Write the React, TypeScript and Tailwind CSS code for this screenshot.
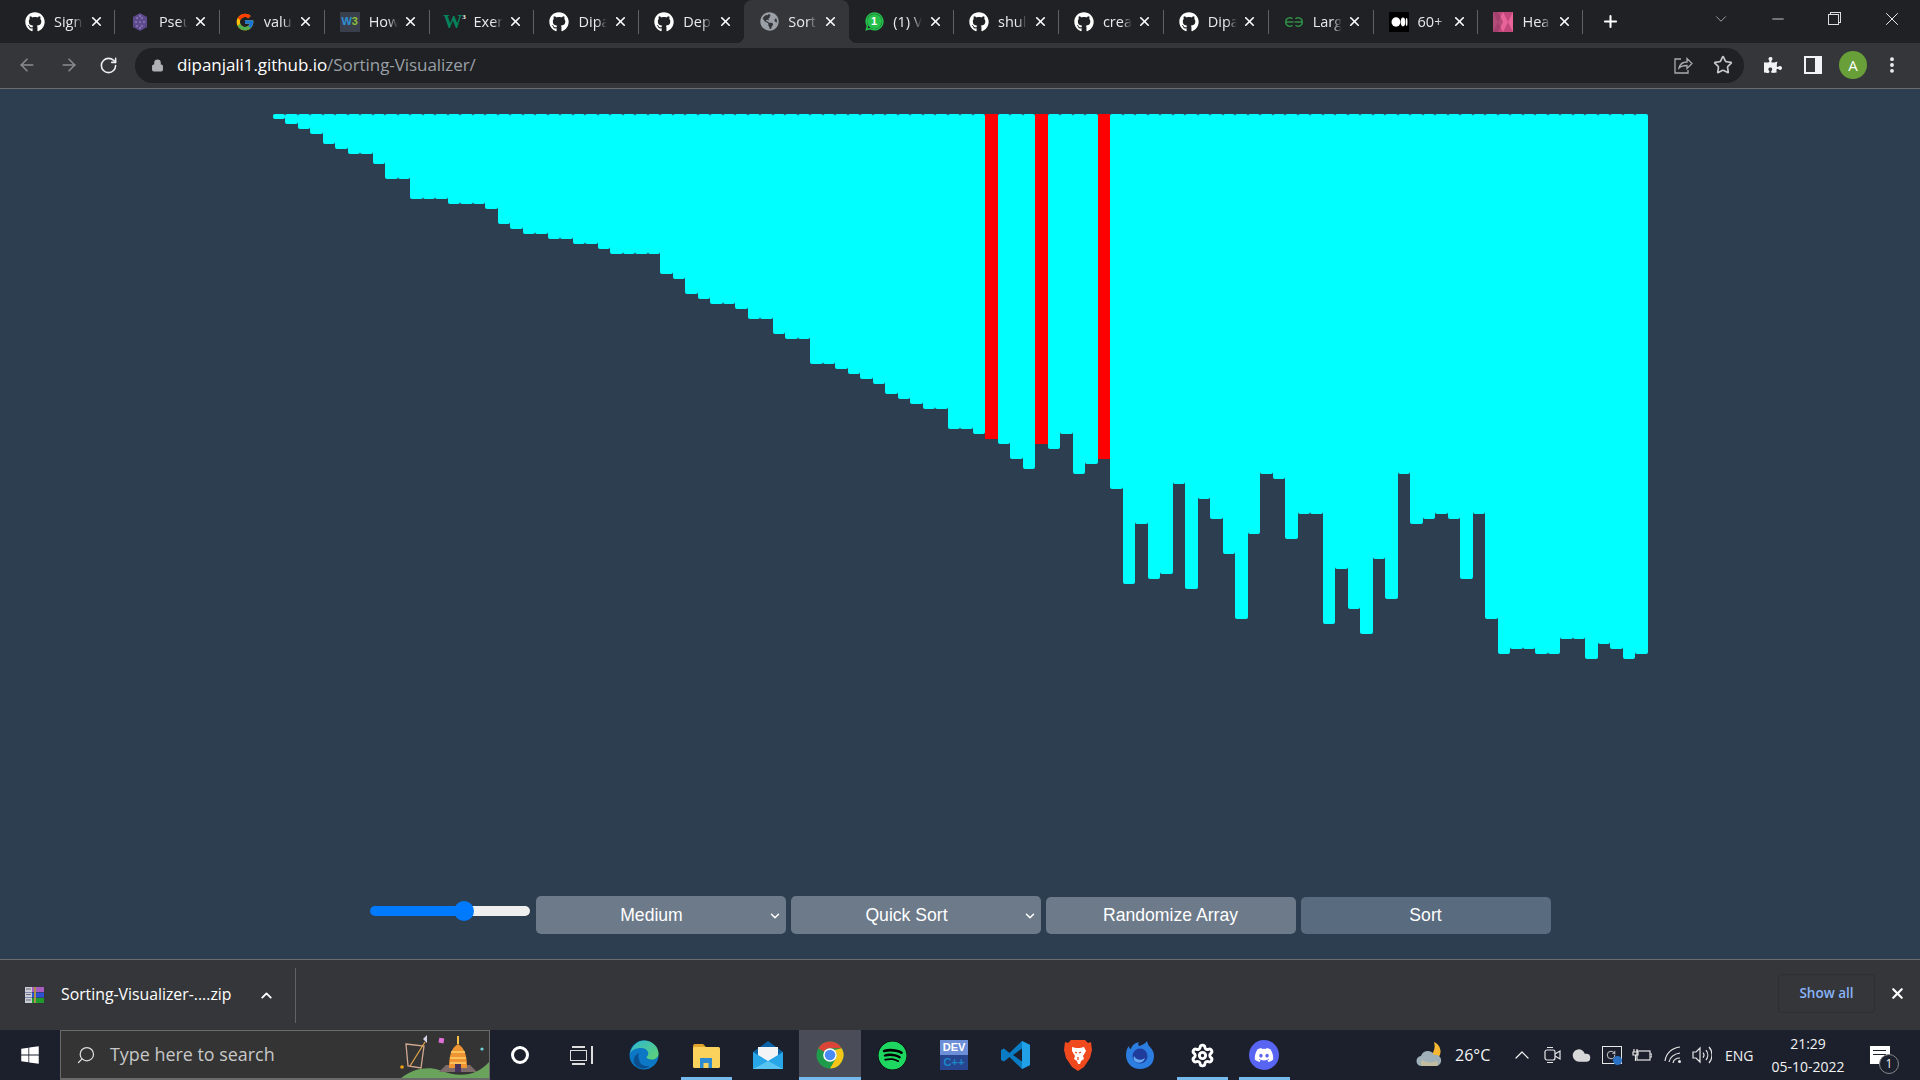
import React from 'react';
import { ArrowLeft, ArrowRight, RotateCw, Lock, Star, MoreVertical, X, Plus, ChevronDown, ChevronUp, Minus, Search, Settings, Cloud } from 'lucide-react';
import { FaGithub, FaGlobeAmericas, FaWhatsapp, FaWindows, FaSpotify, FaDiscord, FaPuzzlePiece } from 'react-icons/fa';
import { FcGoogle } from 'react-icons/fc';

const heights = [
  1, 2, 3, 4, 6, 7, 8, 8, 10, 13, 13, 17, 17, 17, 18, 18, 18, 19, 22, 23, 24, 24, 25, 25, 26, 26, 27, 28, 28, 28, 28, 32, 33, 36, 37,
  38, 38, 39, 41, 41, 44, 45, 45, 50, 50, 51, 52, 53, 54, 56, 57, 58, 59, 59, 63, 63, 64, 65, 66, 69, 71, 66, 67, 64, 72, 70, 69, 75,
  94, 82, 93, 92, 74, 95, 77, 81, 88, 101, 84, 72, 73, 85, 80, 80, 102, 91, 99, 104, 89, 97, 72, 82, 81, 80, 81, 93, 80, 101, 108,
  107, 107, 108, 108, 105, 105, 109, 106, 107, 109, 108,
];
const redBars = [57, 61, 66];

const PseudoIcon = () => (
  <svg width="20" height="20" viewBox="0 0 20 20">
    <polygon points="10,1 17,5 17,15 10,19 3,15 3,5" fill="#5d4a8c" />
    <path d="M6 6h2M11 6h2M5 10h2M9 10h2M13 10h2M6 14h2M11 14h2M10 3v2M10 15v2" stroke="#9d8cc9" strokeWidth="1.2" />
  </svg>
);

const W3Icon = () => (
  <div className="flex h-5 w-5 items-center justify-center bg-[#3a3f4c] font-['Liberation_Sans',sans-serif] text-[11px] font-bold leading-none">
    <span className="text-[#2d8fd5]">W</span>
    <span className="text-[#8bbf3a]">3</span>
  </div>
);

const W3SchoolsIcon = () => (
  <div className="flex h-5 w-5 items-start justify-center font-['Liberation_Serif',serif] text-[19px] font-bold leading-[20px] text-[#04845c]">
    W<span className="text-[7px] leading-[10px] text-white">3</span>
  </div>
);

const WhatsappBadge = () => (
  <div className="relative flex h-5 w-5 items-center justify-center text-[#25c04c]">
    <FaWhatsapp size={21} className="absolute" />
    <span className="absolute flex h-[15px] w-[15px] items-center justify-center rounded-full bg-[#25c04c] font-['Liberation_Sans',sans-serif] text-[11px] font-bold text-white">1</span>
  </div>
);

const GfgIcon = () => (
  <svg width="20" height="20" viewBox="0 0 20 20" fill="none" stroke="#2f8d46" strokeWidth="1.5">
    <path d="M9.5 10H1.5M10.5 10H18.5M8.5 6.8A4 4 0 0 0 1.8 10a4 4 0 0 0 6.7 3.2M11.5 6.8a4 4 0 0 1 6.7 3.2 4 4 0 0 1-6.7 3.2" />
  </svg>
);

const MediumIcon = () => (
  <svg width="20" height="20" viewBox="0 0 20 20">
    <rect width="20" height="20" rx="1" fill="#000" />
    <ellipse cx="7" cy="10" rx="4.5" ry="4.7" fill="#fff" />
    <ellipse cx="14" cy="10" rx="2.2" ry="4.4" fill="#fff" />
    <ellipse cx="17.6" cy="10" rx="0.9" ry="4" fill="#fff" />
  </svg>
);

const PinkIcon = () => (
  <svg width="20" height="20" viewBox="0 0 20 20">
    <rect width="20" height="20" fill="#c2487c" />
    <path d="M0 0l5 10L0 20zM20 0l-5 10 5 10zM5 10l5-10 5 10-5 10z" fill="#e86498" />
    <path d="M0 0h5l5 10-5 10H0z" fill="#8c3a62" opacity=".6" />
  </svg>
);

const tabs: { icon: React.ReactNode; title: string }[] = [
  { icon: <FaGithub size={20} color="#fff" />, title: 'Sign' },
  { icon: <PseudoIcon />, title: 'Pseu' },
  { icon: <FcGoogle size={20} />, title: 'valu' },
  { icon: <W3Icon />, title: 'How' },
  { icon: <W3SchoolsIcon />, title: 'Exer' },
  { icon: <FaGithub size={20} color="#fff" />, title: 'Dipa' },
  { icon: <FaGithub size={20} color="#fff" />, title: 'Dep' },
  { icon: <FaGlobeAmericas size={19} color="#9aa0a6" />, title: 'Sort' },
  { icon: <WhatsappBadge />, title: '(1) V' },
  { icon: <FaGithub size={20} color="#fff" />, title: 'shul' },
  { icon: <FaGithub size={20} color="#fff" />, title: 'crea' },
  { icon: <FaGithub size={20} color="#fff" />, title: 'Dipa' },
  { icon: <GfgIcon />, title: 'Larg' },
  { icon: <MediumIcon />, title: '60+' },
  { icon: <PinkIcon />, title: 'Hea' },
];
const activeTab = 7;

const TabStrip = () => (
  <div className="flex h-[43px] shrink-0 items-center bg-[#202124] pl-[10px] font-['Open_Sans',sans-serif] text-[14.5px] text-[#e8eaed]">
    {tabs.map((tab, i) => {
      const hideLine = i === activeTab || i === activeTab - 1;
      return (
        <div key={i} className={i === activeTab ? 'relative flex h-[43px] w-[104.9px] items-center rounded-t-lg bg-[#35363a] pl-[15px]' : 'relative flex h-[43px] w-[104.9px] items-center pl-[15px]'}>
          {i === activeTab && <span className="absolute -left-2 bottom-0 h-2 w-2 bg-[radial-gradient(circle_at_0_0,transparent_8px,#35363a_8.5px)]" />}
          {i === activeTab && <span className="absolute -right-2 bottom-0 h-2 w-2 bg-[radial-gradient(circle_at_100%_0,transparent_8px,#35363a_8.5px)]" />}
          <div className="flex w-5 shrink-0 items-center justify-center">{tab.icon}</div>
          <div className="ml-[9px] w-[32px] overflow-hidden whitespace-nowrap [mask-image:linear-gradient(to_right,black_60%,transparent_90%)]">{tab.title}</div>
          <X size={15} strokeWidth={2.6} color="#fff" className="ml-[2.5px] shrink-0" />
          {!hideLine && <span className="absolute right-0 top-[10px] h-[24px] w-px bg-[#5f6368]" />}
        </div>
      );
    })}
    <Plus size={19} strokeWidth={2.6} color="#fff" className="ml-[18px] shrink-0" />
    <ChevronDown size={18} strokeWidth={1} color="#c4c7c9" className="ml-[92px] -mt-[6px] shrink-0" />
    <Minus size={18} strokeWidth={1} color="#fff" className="ml-[39px] -mt-[6px] shrink-0" />
    <div className="relative ml-[41px] -mt-[6px] h-[13px] w-[13px] shrink-0">
      <span className="absolute right-0 top-0 h-[11px] w-[11px] border border-[#ddd]" />
      <span className="absolute bottom-0 left-0 h-[11px] w-[11px] border border-[#ddd] bg-[#202124]" />
    </div>
    <X size={22} strokeWidth={1} color="#fff" className="ml-[40px] -mt-[6px] shrink-0" />
  </div>
);

const ShareIcon = () => (
  <svg width="20" height="20" viewBox="0 0 20 20" fill="none" stroke="#a9abae" strokeWidth="1.3">
    <path d="M8 4H2v14h13v-3" />
    <path d="M6 13c1-4 4-6 8-6V3.500l5 5-5 5V10.500c-3 0-6 .5-8 2.500z" />
  </svg>
);

const Toolbar = () => (
  <div className="flex h-[46px] shrink-0 items-center border-b border-[#6d6e70] bg-[#35363a] pb-px">
    <ArrowLeft size={20} color="#8b8d90" strokeWidth={1.8} className="ml-[17px]" />
    <ArrowRight size={20} color="#8b8d90" strokeWidth={1.8} className="ml-[22px]" />
    <RotateCw size={19} color="#eceef0" strokeWidth={2} className="ml-[20px]" />
    <div className="ml-[17px] flex h-[35px] w-[1609px] items-center rounded-full bg-[#202124] pl-[16px]">
      <Lock size={13} fill="#aeb1b5" color="#aeb1b5" strokeWidth={2} />
      <div className="ml-[13px] font-['Open_Sans',sans-serif] text-[17px] tracking-[-0.06px] text-[#9aa0a6]">
        <span className="text-white">dipanjali1.github.io</span>/Sorting-Visualizer/
      </div>
      <div className="ml-auto flex items-center pr-[11px]">
        <ShareIcon />
        <Star size={20} color="#c6c8ca" strokeWidth={2} className="ml-[20px]" />
      </div>
    </div>
    <FaPuzzlePiece size={18} color="#f1f3f4" className="ml-[20px]" />
    <div className="ml-[22px] h-[18px] w-[18px] border-2 border-[#f1f3f4] border-r-[7px]" />
    <div className="ml-[17px] flex h-7 w-7 items-center justify-center rounded-full bg-[#689f38] font-['Open_Sans',sans-serif] text-[15px] text-white">A</div>
    <MoreVertical size={20} color="#f1f3f4" strokeWidth={2.6} className="ml-[15px]" />
  </div>
);

const Dropdown = ({ value, options }: { value: string; options: string[] }) => (
  <div className="relative">
    <select defaultValue={value} className="h-[38px] w-[250px] appearance-none rounded-[5px] bg-[#6c7a89] pr-[18px] text-center text-[17.6px] text-white">
      {options.map((option) => (
        <option key={option}>{option}</option>
      ))}
    </select>
    <ChevronDown size={14} strokeWidth={2.6} color="#fff" className="pointer-events-none absolute right-[4px] top-[13px]" />
  </div>
);

const Visualizer = () => (
  <div className="flex min-h-0 flex-1 flex-col bg-[#2c3e50] font-['Liberation_Sans',sans-serif]">
    <div className="flex flex-1 items-start justify-center pt-[25px]">
      {heights.map((value, i) => (
        <div
          key={i}
          className={redBars.includes(i) ? 'w-[12.5px] bg-[#ff0000]' : 'w-[12.5px] rounded-[2px] bg-[#00ffff]'}
          style={{ height: value * 5 }}
        />
      ))}
    </div>
    <div className="mb-[25px] flex items-end justify-center gap-[5px]">
      <input
        type="range"
        min={0}
        max={100}
        defaultValue={60}
        className="mb-[18px] mr-px h-[10px] w-[160px] appearance-none rounded-[5px] bg-[linear-gradient(to_right,#007bff_58%,#efefef_58%)] [&::-webkit-slider-thumb]:h-5 [&::-webkit-slider-thumb]:w-5 [&::-webkit-slider-thumb]:appearance-none [&::-webkit-slider-thumb]:rounded-full [&::-webkit-slider-thumb]:bg-[#007bff]"
      />
      <Dropdown value="Medium" options={['Small', 'Medium', 'Large']} />
      <Dropdown value="Quick Sort" options={['Bubble Sort', 'Merge Sort', 'Quick Sort', 'Heap Sort']} />
      <button className="h-[37px] w-[250px] rounded-[5px] bg-[#6c7a89] text-[17.6px] text-white">Randomize Array</button>
      <button className="h-[37px] w-[250px] rounded-[5px] bg-[#596b7e] text-[17.6px] text-white">Sort</button>
    </div>
  </div>
);

const RarIcon = () => (
  <svg width="20" height="16" viewBox="0 0 20 16">
    <rect x="0" y="0" width="19" height="5" fill="#a85cc0" />
    <rect x="0" y="5.500" width="19" height="5" fill="#2f4fd0" />
    <rect x="0" y="11" width="19" height="5" fill="#1f9a2c" />
    <path d="M0 0h7v5H0zM0 5.500h7v5H0zM0 11h7v5H0z" fill="#c9ccd4" />
    <path d="M9 0h2v16H9z" fill="#a8924a" />
    <path d="M1 2h5M1 7.500h5M1 13h5" stroke="#6b6e78" />
  </svg>
);

const DownloadBar = () => (
  <div className="flex h-[71px] shrink-0 items-center border-t border-[#6d6e70] bg-[#35363a] font-['Open_Sans',sans-serif] text-white">
    <div className="ml-[25px] -mt-px"><RarIcon /></div>
    <div className="ml-4 w-[171px] whitespace-nowrap text-[15.8px]">Sorting-Visualizer-....zip</div>
    <ChevronUp size={17} strokeWidth={2.6} className="ml-[26px]" />
    <div className="ml-[20px] h-[55px] w-px bg-[#5f6368]" />
    <div className="ml-auto -mt-[3px] flex h-[39px] w-[97px] items-center justify-center rounded-[4px] border border-[#2e2f32] text-[13.5px] font-semibold text-[#8ab4f8]">Show all</div>
    <X size={17} strokeWidth={3} className="ml-[14px] mr-[14px] -mt-[3px]" />
  </div>
);

const TempleDoodle = () => (
  <svg width="90" height="50" viewBox="0 0 90 50" className="ml-auto shrink-0">
    <path d="M0 50C12 38 30 36 40 40c20 8 38 6 50-8v18z" fill="#69a35c" />
    <path d="M7 14l18 2-3 22-13-2z" fill="none" stroke="#d0a890" strokeWidth="1.3" />
    <path d="M11 36L26 12" stroke="#e0a34a" strokeWidth="1.3" />
    <path d="M24 9l4 4 0-8z" fill="#d8d0e8" />
    <rect x="40" y="8" width="5" height="5" fill="#e070d8" transform="rotate(10 42 10)" />
    <circle cx="3" cy="37" r="1.8" fill="#f0a010" />
    <circle cx="83" cy="19" r="1.6" fill="#6fd4e0" />
    <path d="M40 42l7-7h24l7 7z" fill="#7d6a6a" />
    <path d="M50 38c0-12 2-20 9-24 7 4 9 12 9 24z" fill="#ef9432" />
    <path d="M52 22h14M51 28h16M51 33h16" stroke="#ffd16a" strokeWidth="1.6" />
    <rect x="56" y="34" width="6" height="8" fill="#46345a" />
    <path d="M59 6v8" stroke="#f4c04a" strokeWidth="2" />
  </svg>
);

const Edge = () => (
  <svg width="30" height="30" viewBox="0 0 30 30">
    <defs>
      <linearGradient id="edgeA" x1="0" y1="0" x2="1" y2="1">
        <stop offset="0" stopColor="#2fb7d4" />
        <stop offset="1" stopColor="#62d36f" />
      </linearGradient>
    </defs>
    <circle cx="15" cy="15" r="14.5" fill="#0c78c5" />
    <path d="M1 14C3 5 9 .5 15 .5c8 0 14.500 6 14.500 13 0 4-3.500 6-7 6-3 0-5-1-5-2.500 4-3 1-9-5-9-6 0-10 2-11.500 6z" fill="url(#edgeA)" />
    <path d="M10 19c0 5 5 8 11 7-5 4-13 3-16-3-1-3 0-8 5-10-1 2-1 4 0 6z" fill="#0a4f8f" />
  </svg>
);

const Folder = () => (
  <svg width="28" height="28" viewBox="0 0 28 28">
    <path d="M1 5a2 2 0 0 1 2-2h8l3 3v4H1z" fill="#e2a52b" />
    <rect x="1" y="6" width="27" height="21" rx="1.5" fill="#fbd25c" />
    <path d="M8 27V17h12v10h-3.500v-5h-5v5z" fill="#2f8bd1" />
  </svg>
);

const Mail = () => (
  <svg width="30" height="30" viewBox="0 0 30 30">
    <path d="M15 1L0 12v17h30V12z" fill="#0a63a8" />
    <path d="M5 7h20v10L15 22 5 17z" fill="#f2f4f6" />
    <path d="M0 12l15 9 15-9v17H0z" fill="#29a6e8" />
    <path d="M0 29l15-8 15 8z" fill="#58c4f2" />
  </svg>
);

const ChromeIcon = () => (
  <svg width="28" height="28" viewBox="0 0 28 28">
    <circle cx="14" cy="14" r="13.500" fill="#1e9c4b" />
    <path d="M14 .5A13.500 13.500 0 0 1 25.700 7.250H14a6.750 6.750 0 0 0-5.850 3.380L2.300 7.250A13.500 13.500 0 0 1 14 .5z" fill="#dc4437" />
    <path d="M25.700 7.250A13.500 13.500 0 0 1 14 27.500l5.850-10.120A6.750 6.750 0 0 0 20.750 14a6.750 6.750 0 0 0-2.250-5z" fill="#f5c518" />
    <circle cx="14" cy="14" r="6.800" fill="#fff" />
    <circle cx="14" cy="14" r="5.300" fill="#4a8af4" />
  </svg>
);

const DevCpp = () => (
  <div className="flex h-[30px] w-[28px] flex-col items-center bg-[#27468f] font-['Liberation_Sans',sans-serif] text-[11px] font-bold leading-[14px]">
    <span className="h-[15px] w-full bg-[#6d8fd8] text-center text-white">DEV</span>
    <span className="text-[#1b88c8]">C++</span>
  </div>
);

const VsCode = () => (
  <svg width="30" height="30" viewBox="0 0 30 30">
    <path d="M21 1l8 4v20l-8 4L8.500 17 3 21.500 0 20v-10l3-1.500L8.500 13z" fill="#0a7cc4" />
    <path d="M21 8.500L12 15l9 6.500z" fill="#1b1f2b" />
    <path d="M21 1l8 4v20l-8 4z" fill="#21a0e8" />
  </svg>
);

const Brave = () => (
  <svg width="28" height="32" viewBox="0 0 28 32">
    <path d="M7 1h14l3 3 3-1 1 8-2 8-6 9-6 4-6-4-6-9-2-8 1-8 3 1z" fill="#f0491d" />
    <path d="M8 8l4 1h4l4-1 2 4-3 5 1 3-3 2-1 3h-2l-1-3-3-2 1-3-3-5z" fill="#fff" />
    <path d="M11 13l2 1M17 13l-2 1M14 18v3" stroke="#f0491d" strokeWidth="1.300" />
  </svg>
);

const Firefox = () => (
  <svg width="30" height="30" viewBox="0 0 30 30">
    <path d="M22 1c1 3 1 4 3 6 3 3 4 6 4 9 0 8-6 13-14 13S1 23 1 15c0-4 1-7 3-9 0 2 1 3 2 3 1-4 4-6 8-7-1 2-1 3 0 4 3-1 6-2 8-5z" fill="#2b7de0" />
    <circle cx="15" cy="16" r="7.500" fill="#1f3c9c" />
    <path d="M9 16c2 4 7 5 11 2-1 4-5 6-9 4-2-1-3-3-2-6z" fill="#65a7f0" />
  </svg>
);

const taskIcons: { icon: React.ReactNode; open?: boolean; active?: boolean }[] = [
  { icon: <Edge /> },
  { icon: <Folder />, open: true },
  { icon: <Mail /> },
  { icon: <ChromeIcon />, open: true, active: true },
  { icon: <FaSpotify size={29} color="#1ed760" className="rounded-full bg-black" /> },
  { icon: <DevCpp /> },
  { icon: <VsCode /> },
  { icon: <Brave /> },
  { icon: <Firefox /> },
  { icon: <Settings size={25} strokeWidth={2.8} color="#fff" />, open: true },
  {
    icon: (
      <div className="flex h-[30px] w-[30px] items-center justify-center rounded-full bg-[#5865f2]">
        <FaDiscord size={20} color="#fff" />
      </div>
    ),
    open: true,
  },
];

const WeatherIcon = () => (
  <svg width="28" height="28" viewBox="0 0 28 28">
    <path d="M18 1a10 10 0 0 1 3 17l-8-2c4-3 7-8 5-15z" fill="#f7b733" />
    <path d="M6 25a5 5 0 0 1-1-10 7 7 0 0 1 13-1 5.500 5.500 0 0 1 3 11z" fill="#9fb0b8" />
    <path d="M6 25a5 5 0 0 1 0-6c5 3 11 3 15 1 1 2 1 4 0 5z" fill="#c2bda0" />
  </svg>
);

const MeetIcon = () => (
  <svg width="17" height="20" viewBox="0 0 17 20" fill="none" stroke="#e6e6e6" strokeWidth="1.2">
    <rect x="1" y="5" width="10" height="10" rx="2" />
    <path d="M11 9l5-3v8l-5-3M3 2.500h6M3 17.500h6" />
  </svg>
);

const ScreenIcon = () => (
  <div className="relative h-[18px] w-[20px] border border-[#e6e6e6]">
    <RotateCw size={10} color="#e6e6e6" className="absolute left-[3px] top-[3px]" />
    <span className="absolute -bottom-[2px] -right-[1px] h-[9px] w-[9px] rounded-full bg-[#2a72c4]" />
  </div>
);

const PlugBattery = () => (
  <svg width="20" height="14" viewBox="0 0 20 14" fill="none" stroke="#e6e6e6" strokeWidth="1.2">
    <rect x="5" y="3" width="13" height="9" />
    <path d="M18 6h2v3h-2" />
    <path d="M1 4h5v3H1zM2 4V1M5 4V1M3.500 7v6" />
  </svg>
);

const WifiArcs = () => (
  <svg width="18" height="18" viewBox="0 0 18 18" fill="none" stroke="#e6e6e6" strokeWidth="1.2">
    <path d="M1 15C2 7 8 2 16 1M5 16c1-5 5-8 11-9M9 17c.5-3 3-5 7-5" />
    <circle cx="15.500" cy="15.500" r="1.500" fill="#e6e6e6" stroke="none" />
  </svg>
);

const VolumeIcon = () => (
  <svg width="20" height="20" viewBox="0 0 20 20" fill="none" stroke="#e6e6e6" strokeWidth="1.2">
    <path d="M1 7h3l4-4v14l-4-4H1zM11 7.500a4 4 0 0 1 0 5M14 5a8 8 0 0 1 0 10M17 2a12 12 0 0 1 0 16" />
  </svg>
);

const Taskbar = () => (
  <div className="flex h-[50px] shrink-0 items-stretch bg-[#1b202c] font-['Open_Sans',sans-serif] text-white">
    <div className="flex w-[60px] items-center justify-center">
      <FaWindows size={20} color="#fff" />
    </div>
    <div className="flex w-[430px] items-center overflow-hidden border border-b-2 border-[#6a6a6a] bg-[#343434] pl-[15px]">
      <Search size={20} strokeWidth={1.5} color="#ddd" className="-scale-x-100" />
      <span className="ml-[14px] text-[17.9px] text-[#c8c8c8]">Type here to search</span>
      <TempleDoodle />
    </div>
    <div className="flex w-[60px] items-center justify-center">
      <div className="h-[18px] w-[18px] rounded-full border-[3px] border-white" />
    </div>
    <div className="flex w-[63px] items-center justify-center">
      <div className="flex flex-col items-center gap-[2px]">
        <span className="h-[2px] w-[13px] bg-[#ddd]" />
        <span className="h-[11px] w-[17px] border border-[#ddd]" />
        <span className="h-[2px] w-[13px] bg-[#ddd]" />
      </div>
      <span className="ml-[4px] h-[18px] w-[2px] bg-[#ddd]" />
    </div>
    {taskIcons.map((task, i) => (
      <div key={i} className={task.active ? 'relative flex w-[62px] items-center justify-center bg-[#4a4d57]' : 'relative flex w-[62px] items-center justify-center'}>
        {task.icon}
        {task.open && <span className={task.active ? 'absolute bottom-0 h-[3px] w-full bg-[#76b9ed]' : 'absolute bottom-0 h-[3px] w-[51px] bg-[#76b9ed]'} />}
      </div>
    ))}
    <div className="ml-auto flex items-center text-[#f2f2f2]">
      <WeatherIcon />
      <span className="ml-[11px] w-[38px] whitespace-nowrap text-[16px]">26°C</span>
      <ChevronUp size={24} strokeWidth={1.2} className="ml-[17px]" />
      <div className="ml-[10px]"><MeetIcon /></div>
      <Cloud size={21} fill="#d8d8d8" strokeWidth={0} className="ml-[10px]" />
      <div className="ml-[10px]"><ScreenIcon /></div>
      <div className="ml-[10px]"><PlugBattery /></div>
      <div className="ml-[12px]"><WifiArcs /></div>
      <div className="ml-[10px]"><VolumeIcon /></div>
      <span className="ml-[13px] w-[30px] text-[14px]">ENG</span>
      <div className="ml-[13px] flex w-[80px] flex-col items-center text-[14px] leading-[23px]">
        <span>21:29</span>
        <span>05-10-2022</span>
      </div>
      <div className="relative ml-[22px] mr-[30px] h-[18px] w-[20px] bg-white">
        <span className="absolute left-[3px] top-[4px] h-px w-[13px] bg-[#1b202c]" />
        <span className="absolute left-[3px] top-[8px] h-px w-[13px] bg-[#1b202c]" />
        <span className="absolute -bottom-[10px] -right-[9px] flex h-[20px] w-[20px] items-center justify-center rounded-full border border-[#888] bg-[#1b202c] text-[12px]">1</span>
      </div>
    </div>
  </div>
);

export default function App() {
  return (
    <div className="flex h-screen w-full flex-col overflow-hidden">
      <TabStrip />
      <Toolbar />
      <Visualizer />
      <DownloadBar />
      <Taskbar />
    </div>
  );
}
